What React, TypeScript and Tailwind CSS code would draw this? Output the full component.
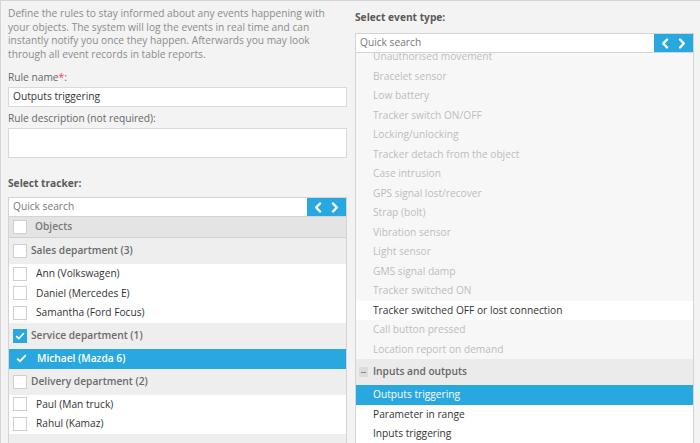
import React from "react";

const font = { fontFamily: '"Open Sans", "Liberation Sans", sans-serif' };

function Chevrons() {
  return (
    <div className="flex h-full w-[39px] shrink-0 items-center justify-center gap-[9px] bg-[#29a8e0]">
      <svg width="8" height="11" viewBox="0 0 8 11">
        <path d="M6 1.5 L2.2 5.5 L6 9.5" stroke="white" strokeWidth="2.4" fill="none" strokeLinecap="round" strokeLinejoin="round" />
      </svg>
      <svg width="8" height="11" viewBox="0 0 8 11">
        <path d="M2 1.5 L5.8 5.5 L2 9.5" stroke="white" strokeWidth="2.4" fill="none" strokeLinecap="round" strokeLinejoin="round" />
      </svg>
    </div>
  );
}

function Search() {
  return (
    <div className="flex h-[20px] border border-[#d4d4d4] bg-white">
      <div className="flex flex-1 items-center pl-[4px] text-[10.2px] text-[#777]">Quick search</div>
      <Chevrons />
    </div>
  );
}

function Box({ checked }: { checked?: boolean }) {
  if (checked) {
    return (
      <div className="flex h-[14px] w-[14px] shrink-0 items-center justify-center bg-[#29a8e0]">
        <svg width="10" height="8" viewBox="0 0 10 8">
          <path d="M1.2 4.2 L3.8 6.6 L8.8 1.2" stroke="white" strokeWidth="1.6" fill="none" />
        </svg>
      </div>
    );
  }
  return <div className="h-[14px] w-[14px] shrink-0 border border-[#cfcfcf] bg-white" />;
}

function Group({ label, checked }: { label: string; checked?: boolean }) {
  return (
    <div className="flex h-[26px] items-center gap-[4px] bg-[#eeeeee] pl-[4px] text-[10.2px] font-semibold text-[#6b6b6b]">
      <Box checked={checked} />
      <span>{label}</span>
    </div>
  );
}

function Item({ label }: { label: string }) {
  return (
    <div className="flex h-[19.5px] items-center bg-white pl-[4px] text-[10.2px] text-[#333]">
      <Box />
      <span className="ml-[9px]">{label}</span>
    </div>
  );
}

const disabled = [
  "Unauthorised movement",
  "Bracelet sensor",
  "Low battery",
  "Tracker switch ON/OFF",
  "Locking/unlocking",
  "Tracker detach from the object",
  "Case intrusion",
  "GPS signal lost/recover",
  "Strap (bolt)",
  "Vibration sensor",
  "Light sensor",
  "GMS signal damp",
  "Tracker switched ON",
];

function Ev({ label, kind }: { label: string; kind: "dis" | "on" | "sel" }) {
  const cls =
    kind === "dis"
      ? "bg-[#f7f7f7] text-[#bdbdbd]"
      : kind === "sel"
      ? "bg-[#29a8e0] text-white"
      : "bg-white text-[#333]";
  return (
    <div className={`flex h-[19.5px] shrink-0 items-center pl-[17px] text-[10.2px] ${cls}`}>{label}</div>
  );
}

export default function App() {
  return (
    <div
      style={font}
      className="flex h-[443px] w-[700px] gap-[8px] overflow-hidden border-l border-t border-[#d4d4d4] bg-[#f3f3f3] pl-[7px]"
    >
      {/* Left column */}
      <div className="flex w-[339px] shrink-0 flex-col pt-[6px]">
        <p className="pr-[14px] text-[10.2px] leading-[13.5px] text-[#8c8c8c]">
          Define the rules to stay informed about any events happening with your objects. The system will log the
          events in real time and can instantly notify you once they happen. Afterwards you may look through all event
          records in table reports.
        </p>
        <div className="mt-[9px] text-[10.2px] leading-[14px] text-[#666]">
          Rule name<span className="text-[#ff3b30]">*</span>:
        </div>
        <div className="mt-[3px] flex h-[20px] items-center border border-[#d9d9d9] bg-white pl-[4px] text-[10.2px] text-[#333]">
          Outputs triggering
        </div>
        <div className="mt-[4px] text-[10.2px] leading-[14px] text-[#666]">Rule description (not required):</div>
        <div className="mt-[3px] h-[30px] border border-[#d9d9d9] bg-white" />
        <div className="mt-[18px] text-[10.2px] font-bold leading-[14px] text-[#5a5a5a]">Select tracker:</div>
        <div className="mt-[7px]">
          <Search />
        </div>
        <div className="flex flex-1 flex-col border-x border-[#d4d4d4]">
          <div className="flex h-[21px] items-center gap-[8px] border-b border-[#d0d0d0] bg-[#e4e4e4] pl-[4px] text-[10.2px] font-semibold text-[#7a7a7a]">
            <Box />
            <span>Objects</span>
          </div>
          <Group label="Sales department (3)" />
          <Item label="Ann (Volkswagen)" />
          <Item label="Daniel (Mercedes E)" />
          <Item label="Samantha (Ford Focus)" />
          <Group label="Service department (1)" checked />
          <div className="flex h-[20px] items-center bg-[#29a8e0] pl-[7px] text-[10.2px] font-semibold text-white">
            <svg width="11" height="9" viewBox="0 0 11 9">
              <path d="M1.2 4.6 L4 7.2 L9.8 1.2" stroke="white" strokeWidth="1.7" fill="none" />
            </svg>
            <span className="ml-[10px]">Michael (Mazda 6)</span>
          </div>
          <Group label="Delivery department (2)" />
          <Item label="Paul (Man truck)" />
          <Item label="Rahul (Kamaz)" />
          <div className="flex-1 bg-[#eeeeee]" />
        </div>
      </div>

      {/* Right column */}
      <div className="flex w-[339px] shrink-0 flex-col pt-[9px]">
        <div className="text-[10.2px] font-bold leading-[14px] text-[#5a5a5a]">Select event type:</div>
        <div className="mt-[9px]">
          <Search />
        </div>
        <div className="flex flex-1 flex-col overflow-hidden border-x border-[#d4d4d4] bg-[#f7f7f7]">
          <div className="-mt-[6px] flex flex-col">
            {disabled.map((d) => (
              <Ev key={d} label={d} kind="dis" />
            ))}
            <Ev label="Tracker switched OFF or lost connection" kind="on" />
            <Ev label="Call button pressed" kind="dis" />
            <Ev label="Location report on demand" kind="dis" />
            <div className="flex h-[26px] items-center bg-[#ebebeb] pl-[3px] text-[10.2px] font-semibold text-[#666]">
              <div className="flex h-[10px] w-[9px] items-center justify-center bg-[#dcdcdc]">
                <div className="h-[1px] w-[5px] bg-[#888]" />
              </div>
              <span className="ml-[5px]">Inputs and outputs</span>
            </div>
            <Ev label="Outputs triggering" kind="sel" />
            <Ev label="Parameter in range" kind="on" />
            <Ev label="Inputs triggering" kind="on" />
          </div>
        </div>
      </div>
    </div>
  );
}
